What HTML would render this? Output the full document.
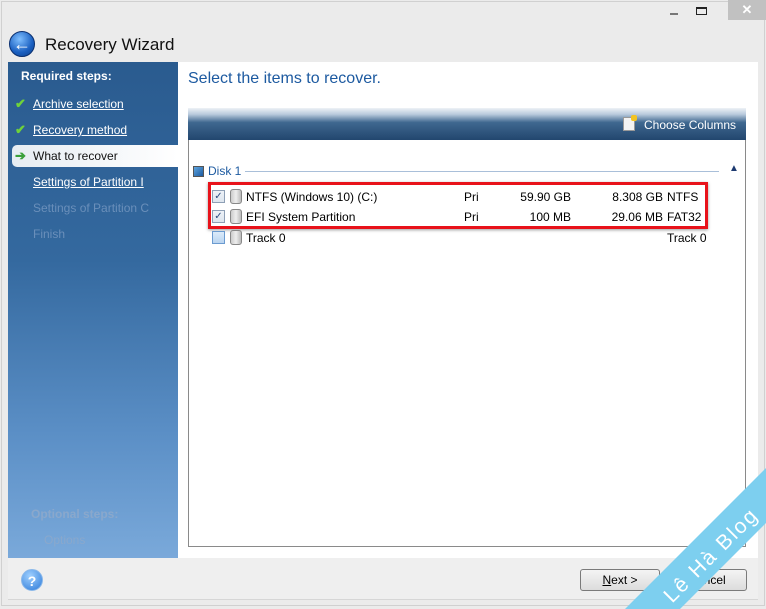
<!DOCTYPE html>
<html><head><meta charset="utf-8"><style>
*{margin:0;padding:0;box-sizing:border-box}
html,body{width:766px;height:609px;overflow:hidden}
body{background:#ebebeb;font-family:"Liberation Sans",sans-serif;position:relative;font-size:12px}
.abs{position:absolute}
.frame{left:1px;top:1px;width:764px;height:605px;border:1px solid #d0d0d0}
.left{left:8px;top:62px;width:170px;height:496px;background:linear-gradient(180deg,#2a5b8f 0%,#34699f 40%,#5b8fc6 75%,#7aa9da 100%)}
.content{left:178px;top:62px;width:580px;height:496px;background:#fff}
.footer{left:8px;top:558px;width:750px;height:42px;background:#efefef;border-bottom:1px solid #d6d6d6}
.step{position:absolute;left:33px;color:#fff;font-size:12px;text-decoration:underline}
.chk{position:absolute;left:15px;color:#6fd23a;font-weight:bold;font-size:13px}
.row{position:absolute;font-size:12px;color:#000}
.cb{position:absolute;width:13px;height:13px;border:1px solid #8e9fb5;background:linear-gradient(#eef2f7,#dde5ee);font-size:10px;line-height:11px;text-align:center;color:#2c4a80}
.hd{position:absolute;width:12px;height:15px;border:1px solid #888;border-radius:3px;background:linear-gradient(90deg,#ccc,#eee,#bbb)}
.btn{position:absolute;top:569px;width:80px;height:22px;border:1px solid #7a7a7a;border-radius:3px;background:linear-gradient(#f4f4f4,#dcdcdc);text-align:center;line-height:20px;font-size:12px}
</style></head><body>
<div class="abs frame"></div>
<div class="abs" style="left:728px;top:0;width:38px;height:20px;background:#c1c1c1;color:#fff;text-align:center;font-size:13px;line-height:20px;font-weight:bold">✕</div>
<div class="abs" style="left:670px;top:13px;width:8px;height:2px;background:#777"></div>
<div class="abs" style="left:696px;top:7px;width:11px;height:8px;border:1px solid #222;border-top-width:2px"></div>
<div class="abs" style="left:9px;top:31px;width:26px;height:26px;border-radius:50%;background:radial-gradient(circle at 40% 30%,#7fbfff,#1a5fc0 60%,#0b3f8a);color:#fff;font-weight:bold;font-size:18px;line-height:25px;text-align:center;border:1px solid #0b3070">←</div>
<div class="abs" style="left:45px;top:35px;font-size:17px;color:#111">Recovery Wizard</div>
<div class="abs left"></div>
<div class="abs" style="left:21px;top:69px;color:#fff;font-weight:bold;font-size:12px">Required steps:</div>
<div class="chk" style="top:96px">✔</div><div class="step" style="top:97px">Archive selection</div>
<div class="chk" style="top:122px">✔</div><div class="step" style="top:123px">Recovery method</div>
<div class="abs" style="left:12px;top:145px;width:166px;height:22px;background:linear-gradient(90deg,#e6ecf2,#fff);border-radius:5px 0 0 5px"></div>
<div class="abs" style="left:15px;top:148px;color:#3aa03a;font-weight:bold;font-size:13px">➔</div>
<div class="abs" style="left:33px;top:149px;color:#111">What to recover</div>
<div class="step" style="top:175px">Settings of Partition I</div>
<div class="abs" style="left:33px;top:201px;color:#6a8fba">Settings of Partition C</div>
<div class="abs" style="left:33px;top:227px;color:#6a8fba">Finish</div>
<div class="abs" style="left:31px;top:507px;color:#8aa8cc;font-weight:bold">Optional steps:</div>
<div class="abs" style="left:44px;top:533px;color:#8aa8cc">Options</div>
<div class="abs content"></div>
<div class="abs" style="left:188px;top:70px;font-size:16px;color:#1d5aa0">Select the items to recover.</div>
<div class="abs" style="left:188px;top:108px;width:558px;height:32px;background:linear-gradient(#eef2f6 0%,#b8c9dc 20%,#3f6890 45%,#22466e 100%)"></div>
<div class="abs" style="left:623px;top:117px;width:12px;height:14px;background:#f3f3f3;border:1px solid #999"></div>
<div class="abs" style="left:631px;top:115px;width:6px;height:6px;background:#f3c321;border-radius:2px"></div>
<div class="abs" style="left:644px;top:118px;color:#fff;font-size:12px">Choose Columns</div>
<div class="abs" style="left:188px;top:140px;width:558px;height:407px;border:1px solid #8a8a8a;border-top:none"></div>
<div class="abs" style="left:193px;top:166px;width:11px;height:11px;border:1px solid #555;background:linear-gradient(135deg,#5fa6e0,#1c5aa0)"></div>
<div class="abs" style="left:208px;top:164px;color:#1d5aa0">Disk 1</div>
<div class="abs" style="left:245px;top:171px;width:474px;height:1px;background:#a9bfd9"></div>
<div class="abs" style="left:729px;top:163px;color:#1d3a70;font-size:10px">▲</div>
<div class="abs" style="left:208px;top:182px;width:500px;height:47px;border:3px solid #e8121a;box-shadow:0 1px 3px rgba(0,0,0,.4)"></div>
<div class="cb" style="left:212px;top:190px">✓</div><div class="hd" style="left:230px;top:189px"></div>
<div class="row" style="left:246px;top:190px">NTFS (Windows 10) (C:)</div>
<div class="row" style="left:464px;top:190px">Pri</div>
<div class="row" style="left:500px;top:190px;width:71px;text-align:right">59.90 GB</div>
<div class="row" style="left:590px;top:190px;width:73px;text-align:right">8.308 GB</div>
<div class="row" style="left:667px;top:190px">NTFS</div>
<div class="cb" style="left:212px;top:210px">✓</div><div class="hd" style="left:230px;top:209px"></div>
<div class="row" style="left:246px;top:210px">EFI System Partition</div>
<div class="row" style="left:464px;top:210px">Pri</div>
<div class="row" style="left:500px;top:210px;width:71px;text-align:right">100 MB</div>
<div class="row" style="left:590px;top:210px;width:73px;text-align:right">29.06 MB</div>
<div class="row" style="left:667px;top:210px">FAT32</div>
<div class="cb" style="left:212px;top:231px;border-color:#6b9bd0;background:linear-gradient(#dcebfa,#b9d4f0)"></div><div class="hd" style="left:230px;top:230px"></div>
<div class="row" style="left:246px;top:231px">Track 0</div>
<div class="row" style="left:667px;top:231px">Track 0</div>
<div class="abs footer"></div>
<div class="abs" style="left:21px;top:569px;width:22px;height:22px;border-radius:50%;background:radial-gradient(circle at 40% 30%,#9fd0ff,#2d7ad8);color:#fff;font-weight:bold;text-align:center;line-height:22px;font-size:14px;border:1px solid #8ab8ea">?</div>
<div class="btn" style="left:580px"><u>N</u>ext &gt;</div>
<div class="btn" style="left:667px">Cancel</div>
<svg class="abs" style="left:0;top:0" width="766" height="609" viewBox="0 0 766 609">
<polygon points="625,609 766,468 766,523 680,609" fill="#7dcfef"/>
<text x="0" y="0" transform="translate(712,556) rotate(-45)" text-anchor="middle" dominant-baseline="middle" fill="#fff" font-family="Liberation Sans, sans-serif" font-size="21" letter-spacing="2">Lê Hà Blog</text>
</svg>
</body></html>
